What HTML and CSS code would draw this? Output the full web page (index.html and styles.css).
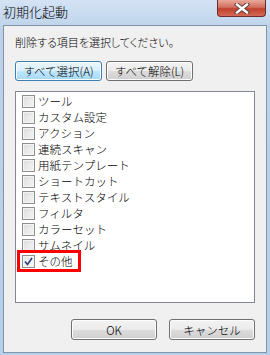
FILE: index.html
```html
<!DOCTYPE html>
<html lang="ja">
<head>
  <meta charset="UTF-8">
  <title>初期化起動</title>
  <link rel="stylesheet" href="styles.css">
</head>
<body>
  <div class="window">
    <div class="titlebar">
      <span class="title">初期化起動</span>
      <button class="close-btn" aria-label="閉じる">
        <svg width="16" height="11" viewBox="0 0 16 11">
          <path d="M3 1.5 L13 9.5 M13 1.5 L3 9.5" stroke="#5a3a3a" stroke-width="4.2" stroke-linecap="square"/>
          <path d="M3 1.5 L13 9.5 M13 1.5 L3 9.5" stroke="#fff" stroke-width="2.4" stroke-linecap="square"/>
        </svg>
      </button>
    </div>

    <div class="client">
      <p class="prompt">削除する項目を選択してください。</p>

      <div class="select-row">
        <button class="btn btn-default">すべて選択(A)</button>
        <button class="btn">すべて解除(L)</button>
      </div>

      <ul class="item-list">
        <li class="item"><span class="check"></span>ツール</li>
        <li class="item"><span class="check"></span>カスタム設定</li>
        <li class="item"><span class="check"></span>アクション</li>
        <li class="item"><span class="check"></span>連続スキャン</li>
        <li class="item"><span class="check"></span>用紙テンプレート</li>
        <li class="item"><span class="check"></span>ショートカット</li>
        <li class="item"><span class="check"></span>テキストスタイル</li>
        <li class="item"><span class="check"></span>フィルタ</li>
        <li class="item"><span class="check"></span>カラーセット</li>
        <li class="item"><span class="check"></span>サムネイル</li>
        <li class="item marked">
          <span class="check checked">
            <svg width="9" height="9" viewBox="0 0 9 9">
              <path d="M1 4.5 L3.5 7.5 L8 1" fill="none" stroke="#2a3f7a" stroke-width="1.6"/>
            </svg>
          </span>その他
        </li>
      </ul>

      <div class="footer">
        <button class="btn btn-wide">OK</button>
        <button class="btn btn-wide">キャンセル</button>
      </div>
    </div>
  </div>
</body>
</html>
```

FILE: styles.css
```css
body {
  margin: 0;
  font-family: "Noto Sans CJK JP", "Noto Sans", sans-serif;
  font-size: 11px;
  font-weight: 300;
  color: #000;
}
.window {
  width: 270px;
  height: 355px;
  box-sizing: border-box;
  background: linear-gradient(#d4e3f4, #bcd2ea 30px, #b8cfe9);
  padding: 0 3px 2px 3px;
  display: flex;
  flex-direction: column;
}
.titlebar {
  height: 26px;
  display: flex;
  justify-content: space-between;
  align-items: flex-start;
}
.title {
  font-size: 13px;
  line-height: 16px;
  padding-top: 4px;
}
.close-btn {
  width: 49px;
  height: 17px;
  margin-right: 1px;
  padding: 0;
  border: 1px solid #6d2c2c;
  border-top: none;
  border-radius: 0 0 4px 4px;
  background: linear-gradient(#e9a99a, #d0705f 45%, #c0402e 55%, #d46a56);
  display: flex;
  align-items: center;
  justify-content: center;
}
.client {
  flex: 1;
  background: #f0f0f0;
  border: 1px solid #8294a8;
  padding: 10px 11px 12px 11px;
  display: flex;
  flex-direction: column;
}
.prompt {
  margin: 0;
  line-height: 13px;
  font-feature-settings: "palt";
}
.select-row {
  display: flex;
  gap: 4px;
  margin-top: 12px;
}
.btn {
  font-family: inherit;
  font-size: 11.5px;
  font-weight: 300;
  color: #000;
  height: 20px;
  width: 87px;
  padding: 0;
  border: 1px solid #707070;
  border-radius: 3px;
  background: linear-gradient(#f3f3f3, #ebebeb 50%, #dddddd 50%, #cfcfcf);
  box-shadow: inset 0 0 0 1px #fcfcfc;
}
.btn-default {
  border-color: #3c7fb1;
  background: linear-gradient(#eaf6fd, #d9f0fc 50%, #bee6fd 50%, #a7d9f5);
}
.item-list {
  list-style: none;
  margin: 10px 0 0 0;
  padding: 1px 0 0 6px;
  height: 209px;
  background: #fff;
  border: 1px solid #828790;
  font-size: 11.5px;
}
.item {
  display: flex;
  align-items: center;
  height: 16px;
  width: max-content;
}
.check {
  width: 11px;
  height: 11px;
  border: 1px solid #8e8f8f;
  background: linear-gradient(135deg, #dcdcdc, #f6f6f6);
  box-shadow: inset 0 0 0 1px #f4f4f4;
  margin-right: 3px;
  display: flex;
  align-items: center;
  justify-content: center;
}
.check.checked {
  background: linear-gradient(135deg, #e6e6e6, #fafafa);
}
.marked {
  outline: 3px solid #f00;
  margin-left: -2px;
  padding: 0 5px 0 2px;
}
.footer {
  display: flex;
  justify-content: flex-end;
  gap: 12px;
  margin-top: 16px;
}
.btn-wide {
  width: 86px;
  height: 21px;
}
```
